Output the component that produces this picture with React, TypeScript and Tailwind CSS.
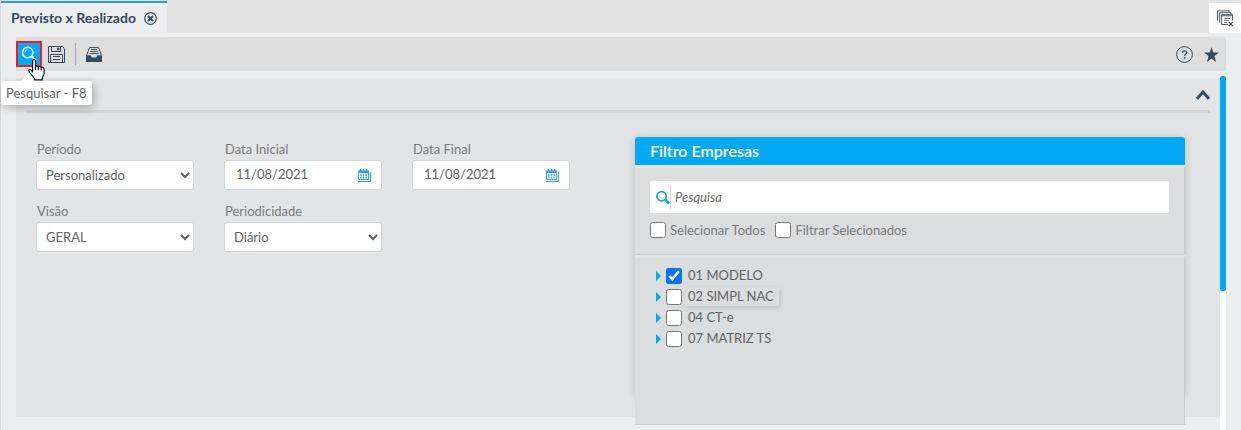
import { useState } from "react";
import type { ReactNode } from "react";

interface Company {
  id: string;
  name: string;
  highlighted?: boolean;
}

const companies: Company[] = [
  { id: "01", name: "MODELO" },
  { id: "02", name: "SIMPL NAC", highlighted: true },
  { id: "04", name: "CT-e" },
  { id: "07", name: "MATRIZ TS" },
];

function SearchIcon() {
  return (
    <svg width="16" height="16" viewBox="0 0 16 16" fill="none" stroke="currentColor">
      <circle cx="6.7" cy="6.5" r="5.2" strokeWidth="1.4" />
      <path d="M3.9 6.5a2.8 2.8 0 0 1 2.8-2.8" strokeWidth="0.7" />
      <path d="m10.6 10.4 4.4 4.4" strokeWidth="2" />
    </svg>
  );
}

function SaveIcon() {
  return (
    <svg width="17" height="17" viewBox="0 0 17 17" fill="none" stroke="currentColor">
      <path d="M.5.5h13.700l2.300 2.300v13.700H.5z" />
      <path d="M3.500.5v5h9v-5M9.500 2v2h1.400V2z" />
      <path d="M2.500 16.500v-8h12v8M5 10.500h7M5 13.500h7" />
    </svg>
  );
}

function InboxIcon() {
  return (
    <svg width="16" height="15" viewBox="0 0 16 15" fill="none" stroke="currentColor">
      <path d="M.6 8.400 3.500.6h9l2.900 7.800" />
      <path d="M5 2.600h6M4.200 4.600h7.600M3.400 6.600h9.200" />
      <path d="M0 8.200h4.700l1 2.200h4.600l1-2.200H16V15H0z" fill="currentColor" stroke="none" />
    </svg>
  );
}

function CalendarIcon() {
  return (
    <svg width="13" height="13" viewBox="0 0 13 13" fill="none" stroke="currentColor">
      <path d="M.5 2.500h10v8H.5z" />
      <path d="M0 1.500h11V4H0z" fill="currentColor" stroke="none" />
      <path d="M2.500 0v3M5.500 0v3M8.500 0v3" strokeWidth="1.600" />
      <path d="M2 6h7.500M2 8.500h7.500" strokeWidth="1.500" strokeDasharray="1.700 1" />
      <path d="M12.500 3v9.500H0" />
    </svg>
  );
}

function WindowsIcon() {
  return (
    <svg width="17" height="17" viewBox="0 0 17 17" fill="none" stroke="currentColor" strokeWidth="0.9">
      <path d="M.5 10.500V.8h11.600v1.600" />
      <path d="M2.600 12.500V2.600H14v1.800" />
      <path d="M10.500 14.500H4.600V4.600h11v6" />
      <path d="M4.600 5.800h11" />
      <path d="M7 8.500h6M7 10.500h5M7 12.500h3" strokeWidth="0.700" />
      <path d="m11.700 11.800 4.300 4.400m0-4.400-4.300 4.400" strokeWidth="1.100" />
    </svg>
  );
}

function HandCursor() {
  return (
    <svg
      className="pointer-events-none absolute top-[18px] left-3 z-20"
      width="18"
      height="22"
      viewBox="0 0 18 22"
      fill="#fff"
      stroke="#111827"
      strokeWidth="1.2"
      strokeLinejoin="round"
    >
      <path d="M4.600 13V2.200C4.600 0 7.500 0 7.500 2.200v6c0-1.600 2.800-1.500 2.800.3 0-1.500 2.800-1.300 2.800.6 0-1.400 3-1.200 3 .8v4.300c0 2-1.800 3.600-1.800 5.400v1.200H6.400v-1.200C5.300 17.500 2.200 14.600 1 12.300c-.9-1.800 1.500-2.400 2.400-.9z" />
      <path d="M7.500 8v3M10.300 8.700v2.500M13.100 9.400v2" />
    </svg>
  );
}

const fieldClass =
  "h-[30px] w-full rounded-[3px] border border-[#d1d5da] bg-white text-[13px] text-[#626262] outline-none";

function Field({ id, label, children }: { id: string; label: string; children: ReactNode }) {
  return (
    <div>
      <label htmlFor={id} className="block h-[21px] pl-px text-[13px] leading-5 text-[#7b7b7b]">
        {label}
      </label>
      {children}
    </div>
  );
}

function SelectField({ id, label, options }: { id: string; label: string; options: string[] }) {
  return (
    <Field id={id} label={label}>
      <select id={id} className={`${fieldClass} pl-[5px]`}>
        {options.map((option) => (
          <option key={option}>{option}</option>
        ))}
      </select>
    </Field>
  );
}

function DateField({ id, label }: { id: string; label: string }) {
  const [value, setValue] = useState("11/08/2021");

  return (
    <Field id={id} label={label}>
      <div className={`${fieldClass} flex items-center pr-2.5 pl-[11px]`}>
        <input
          id={id}
          type="text"
          value={value}
          onChange={(e) => setValue(e.target.value)}
          className="min-w-0 flex-1 outline-none"
        />
        <button type="button" aria-label={`Abrir ${label}`} className="text-[#2b9ff0]">
          <CalendarIcon />
        </button>
      </div>
    </Field>
  );
}

function CompanyFilter() {
  const [search, setSearch] = useState("");
  const [checked, setChecked] = useState<string[]>(["01"]);

  const toggle = (id: string) => {
    setChecked((prev) => (prev.includes(id) ? prev.filter((c) => c !== id) : [...prev, id]));
  };

  return (
    <section className="h-[258px] min-w-0 flex-1 rounded-t-[3px] shadow-[0_1px_8px_rgba(0,0,0,0.18)]">
      <h2 className="h-7 rounded-t-[3px] bg-[#03a9f4] px-[15px] text-base leading-7 font-semibold text-white">
        Filtro Empresas
      </h2>
      <div className="h-[90px] border-t-[3px] border-r border-b border-t-[#e4e5e7] border-r-[#cccdcf] border-b-[#cccdcf] bg-[#dcddde] px-[15px] pt-[13px]">
        <div className="flex h-8 items-center rounded-[2px] bg-white px-1.5">
          <svg width="14" height="14" viewBox="0 0 14 14" fill="none" stroke="#1e9bf0">
            <circle cx="5.600" cy="6.200" r="4.600" strokeWidth="1.800" />
            <path d="m9 9.500 4 4" strokeWidth="2.600" />
          </svg>
          <input
            type="text"
            aria-label="Pesquisa"
            placeholder="Pesquisa"
            value={search}
            onChange={(e) => setSearch(e.target.value)}
            className="h-6 min-w-0 flex-1 border-l border-[#d5d6d8] pl-1 text-[13px] italic outline-none placeholder:text-[#6b6b6b]"
          />
        </div>
        <div className="flex gap-2.5 pt-[7px] text-[13px] leading-5 text-[#7b7b7b]">
          <label className="flex items-center gap-1">
            <input type="checkbox" className="size-4" />
            Selecionar Todos
          </label>
          <label className="flex items-center gap-1">
            <input type="checkbox" className="size-4" />
            Filtrar Selecionados
          </label>
        </div>
      </div>
      <div className="h-[170px] border-t-[3px] border-r border-b border-t-[#e4e5e7] border-r-[#cccdcf] border-b-[#cccdcf] bg-[#dcddde] px-5 pt-[7px]">
        <ul>
          {companies.map((company) => (
            <li key={company.id} className="flex h-[21px] items-center">
              <button type="button" aria-label={`Expandir ${company.name}`} className="pr-[5px] text-[#03a9f4]">
                <svg width="6" height="10" viewBox="0 0 6 10" fill="currentColor">
                  <path d="M1 0v10l5-5z" />
                </svg>
              </button>
              <input
                id={`company-${company.id}`}
                type="checkbox"
                checked={checked.includes(company.id)}
                onChange={() => toggle(company.id)}
                className="size-4"
              />
              <label
                htmlFor={`company-${company.id}`}
                className={`ml-[3px] pr-[5px] pl-[3px] text-[13px] leading-[19px] text-[#626262] ${
                  company.highlighted ? "shadow-[1px_2px_4px_rgba(0,0,0,0.14)]" : ""
                }`}
              >
                {company.id} {company.name}
              </label>
            </li>
          ))}
        </ul>
      </div>
    </section>
  );
}

export default function App() {
  return (
    <div className="flex min-h-screen flex-col border-l border-[#d5d6d8] bg-[#ecedef] font-[Lato,sans-serif]">
      {/* Tabs */}
      <header className="flex h-[33px] justify-between bg-[#e3e3e3]">
        <div className="mt-px flex items-center gap-2 border-t-2 border-[#3498db] bg-[#ecedef] px-2.5 text-[#34495e]">
          <span className="text-sm font-bold">Previsto x Realizado</span>
          <button type="button" aria-label="Fechar aba">
            <svg width="13" height="13" viewBox="0 0 13 13" fill="none" stroke="currentColor">
              <circle cx="6.500" cy="6.500" r="5.800" strokeWidth="1.200" />
              <path d="m4 4 5 5m0-5L4 9" strokeWidth="2" />
            </svg>
          </button>
        </div>
        <button
          type="button"
          aria-label="Fechar todas"
          className="mt-[3px] flex w-8 items-center justify-center bg-white text-[#34495e]"
        >
          <WindowsIcon />
        </button>
      </header>

      <main className="mt-1 mr-[15px] ml-[15px] flex flex-1 flex-col">
        {/* Toolbar */}
        <div className="flex h-[34px] items-center bg-[#dedede] text-[#34495e]">
          <div className="relative">
            <button
              type="button"
              aria-label="Pesquisar"
              className="flex size-[26px] items-center justify-center border-2 border-[#ed1c24] bg-[#03a9f4] text-white"
            >
              <SearchIcon />
            </button>
            <HandCursor />
            <div className="absolute top-10 -left-[15px] z-10 rounded-[3px] bg-white px-[5px] text-[13px] leading-6 whitespace-nowrap text-[#626262] shadow-[2px_3px_8px_rgba(0,0,0,0.25)]">
              <svg className="absolute bottom-full left-5" width="18" height="10" viewBox="0 0 18 10" fill="#fff">
                <path d="M0 10 9 1l9 9z" />
              </svg>
              Pesquisar - F8
            </div>
          </div>
          <button type="button" aria-label="Salvar" className="ml-1.5">
            <SaveIcon />
          </button>
          <div className="mx-2.5 h-[22px] w-px bg-[#a0a6ad]" />
          <button type="button" aria-label="Arquivo">
            <InboxIcon />
          </button>
          <div className="ml-auto flex items-center gap-[11px] pr-[7px]">
            <button type="button" aria-label="Ajuda">
              <svg width="17" height="17" viewBox="0 0 17 17" fill="none" stroke="currentColor">
                <circle cx="8.500" cy="8.500" r="7.900" />
                <path d="M6.500 6.800c0-2.700 4.200-2.600 4.200-.2 0 1.500-2.100 1.600-2.100 3.200" strokeWidth="1.300" />
                <path d="M8.600 11v1.500" strokeWidth="1.500" />
              </svg>
            </button>
            <button type="button" aria-label="Favorito">
              <svg width="15" height="15" viewBox="0 0 15 15" fill="currentColor">
                <path d="m7.500 0 1.800 5.600H15l-4.600 3.500 1.700 5.900-4.600-3.600L2.900 15l1.700-5.900L0 5.600h5.700z" />
              </svg>
            </button>
          </div>
        </div>

        <div className="mt-[5px] flex flex-1">
          <div className="min-w-0 flex-1">
            <div className="mt-0.5 rounded-[3px] bg-[#e3e4e6] pb-[22px]">
              <div className="mx-2.5 flex h-[35px] items-center justify-end border-b-[3px] border-[#d3d4d6] text-[#34495e]">
                <button type="button" aria-label="Recolher">
                  <svg width="14" height="11" viewBox="0 0 14 11" fill="none" stroke="currentColor">
                    <path d="m1 9.800 6-6.800 6 6.800" strokeWidth="3" />
                  </svg>
                </button>
              </div>
              {/* Filters */}
              <div className="mt-6 flex gap-[65px] pr-[35px] pl-5">
                <div className="mt-0.5 grid shrink-0 grid-cols-[158px_158px_158px] content-start gap-x-[30px] gap-y-[11px]">
                  <SelectField id="periodo" label="Período" options={["Personalizado", "Mensal", "Anual"]} />
                  <DateField id="data-inicial" label="Data Inicial" />
                  <DateField id="data-final" label="Data Final" />
                  <SelectField id="visao" label="Visão" options={["GERAL"]} />
                  <SelectField id="periodicidade" label="Periodicidade" options={["Diário", "Mensal"]} />
                </div>
                <CompanyFilter />
              </div>
            </div>
          </div>
          {/* Scroll track */}
          <div className="w-1.5 bg-white">
            <div className="h-[215px] rounded-[2px] bg-[#03a9f4]" />
          </div>
        </div>
      </main>
    </div>
  );
}
